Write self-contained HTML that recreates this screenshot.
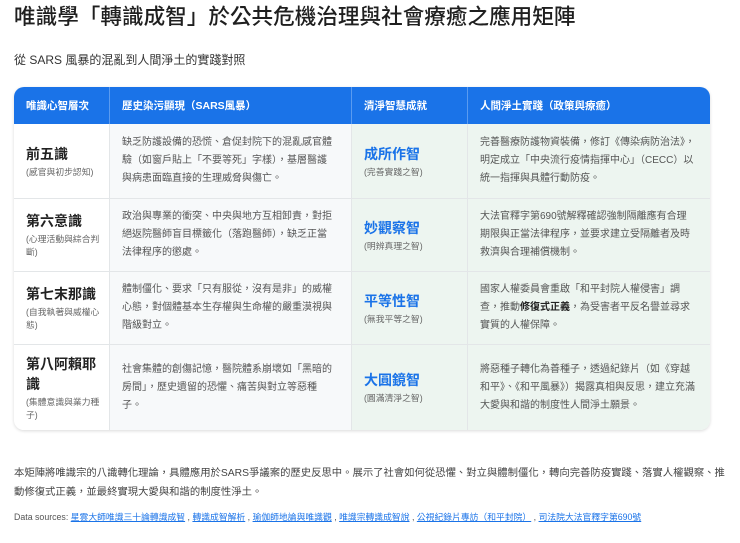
<!DOCTYPE html>
<html><head><meta charset="utf-8"><style>
body{margin:0;background:#fff;font-family:"Liberation Sans","Noto Sans CJK TC",sans-serif;color:#222;width:740px;height:543px;overflow:hidden;position:relative}
h1{position:absolute;left:14px;top:2px;margin:0;font-size:21.6px;font-weight:500;color:#1f1f1f;line-height:30px;white-space:nowrap}
.sub{position:absolute;left:14px;top:52px;font-size:12px;color:#333;line-height:16px}
table{position:absolute;left:14px;top:87px;width:696px;border-collapse:separate;border-spacing:0;border-radius:10px;overflow:hidden;box-shadow:0 1px 3px rgba(0,0,0,.15);table-layout:fixed}
th{background:#1a73e8;color:#fff;font-size:10.5px;font-weight:bold;text-align:left;height:37px;padding:0 0 0 12px;border-right:1px solid #5a9bf0;box-sizing:border-box}
th:last-child{border-right:none}
td{border-top:1px solid #e3e6e8;border-right:1px solid #e3e6e8;font-size:10px;line-height:18px;color:#555;vertical-align:middle;padding:0 10px 0 12px;box-sizing:border-box}
td:last-child{border-right:none}
tr:nth-child(2) td{border-top:none}
.c1{background:#fff;padding-right:8px}
.c2{background:#f7f9fa;padding-right:16px}
.c3,.c4{background:#edf5f0}
.c4{white-space:nowrap;padding-right:4px}
.n{font-size:14px;font-weight:bold;color:#222;line-height:20px}
.s{font-size:8.8px;color:#666;line-height:13px;margin-top:2px}
.w{font-size:14px;font-weight:bold;color:#1a73e8;line-height:20px}
.foot{position:absolute;left:14px;top:464px;width:712px;font-size:10.35px;line-height:19px;color:#444}
.src{position:absolute;left:14px;top:510px;font-size:8.8px;color:#555;white-space:nowrap}
.src a{color:#1a73e8;text-decoration:underline}
</style></head><body>
<h1>唯識學「轉識成智」於公共危機治理與社會療癒之應用矩陣</h1>
<div class="sub">從 SARS 風暴的混亂到人間淨土的實踐對照</div>
<table>
<colgroup><col style="width:96px"><col style="width:242px"><col style="width:116px"><col></colgroup>
<tr><th>唯識心智層次</th><th>歷史染污顯現（SARS風暴）</th><th>清淨智慧成就</th><th>人間淨土實踐（政策與療癒）</th></tr>
<tr style="height:74px"><td class="c1"><div class="n">前五識</div><div class="s">(感官與初步認知)</div></td><td class="c2">缺乏防護設備的恐慌、倉促封院下的混亂感官體驗（如窗戶貼上「不要等死」字樣），基層醫護與病患面臨直接的生理威脅與傷亡。</td><td class="c3"><div class="w">成所作智</div><div class="s">(完善實踐之智)</div></td><td class="c4">完善醫療防護物資裝備，修訂《傳染病防治法》，<br>明定成立「中央流行疫情指揮中心」（CECC）以<br>統一指揮與具體行動防疫。</td></tr>
<tr style="height:73px"><td class="c1"><div class="n">第六意識</div><div class="s">(心理活動與綜合判斷)</div></td><td class="c2">政治與專業的衝突、中央與地方互相卸責，對拒絕返院醫師盲目標籤化（落跑醫師），缺乏正當法律程序的懲處。</td><td class="c3"><div class="w">妙觀察智</div><div class="s">(明辨真理之智)</div></td><td class="c4">大法官釋字第690號解釋確認強制隔離應有合理<br>期限與正當法律程序，並要求建立受隔離者及時<br>救濟與合理補償機制。</td></tr>
<tr style="height:73px"><td class="c1"><div class="n">第七末那識</div><div class="s">(自我執著與威權心態)</div></td><td class="c2">體制僵化、要求「只有服從，沒有是非」的威權心態，對個體基本生存權與生命權的嚴重漠視與階級對立。</td><td class="c3"><div class="w">平等性智</div><div class="s">(無我平等之智)</div></td><td class="c4">國家人權委員會重啟「和平封院人權侵害」調<br>查，推動<b style="color:#222">修復式正義</b>，為受害者平反名譽並尋求<br>實質的人權保障。</td></tr>
<tr style="height:86px"><td class="c1"><div class="n">第八阿賴耶識</div><div class="s">(集體意識與業力種子)</div></td><td class="c2">社會集體的創傷記憶，醫院體系崩壞如「黑暗的房間」，歷史遺留的恐懼、痛苦與對立等惡種子。</td><td class="c3"><div class="w">大圓鏡智</div><div class="s">(圓滿清淨之智)</div></td><td class="c4">將惡種子轉化為善種子，透過紀錄片（如《穿越<br>和平》、《和平風暴》）揭露真相與反思，建立充滿<br>大愛與和諧的制度性人間淨土願景。</td></tr>
</table>
<div class="foot">本矩陣將唯識宗的八識轉化理論，具體應用於SARS爭議案的歷史反思中。展示了社會如何從恐懼、對立與體制僵化，轉向完善防疫實踐、落實人權觀察、推動修復式正義，並最終實現大愛與和諧的制度性淨土。</div>
<div class="src">Data sources: <a>星雲大師唯識三十論轉識成智</a> , <a>轉識成智解析</a> , <a>瑜伽師地論與唯識觀</a> , <a>唯識宗轉識成智說</a> , <a>公視紀錄片專訪（和平封院）</a> , <a>司法院大法官釋字第690號</a></div>
</body></html>
